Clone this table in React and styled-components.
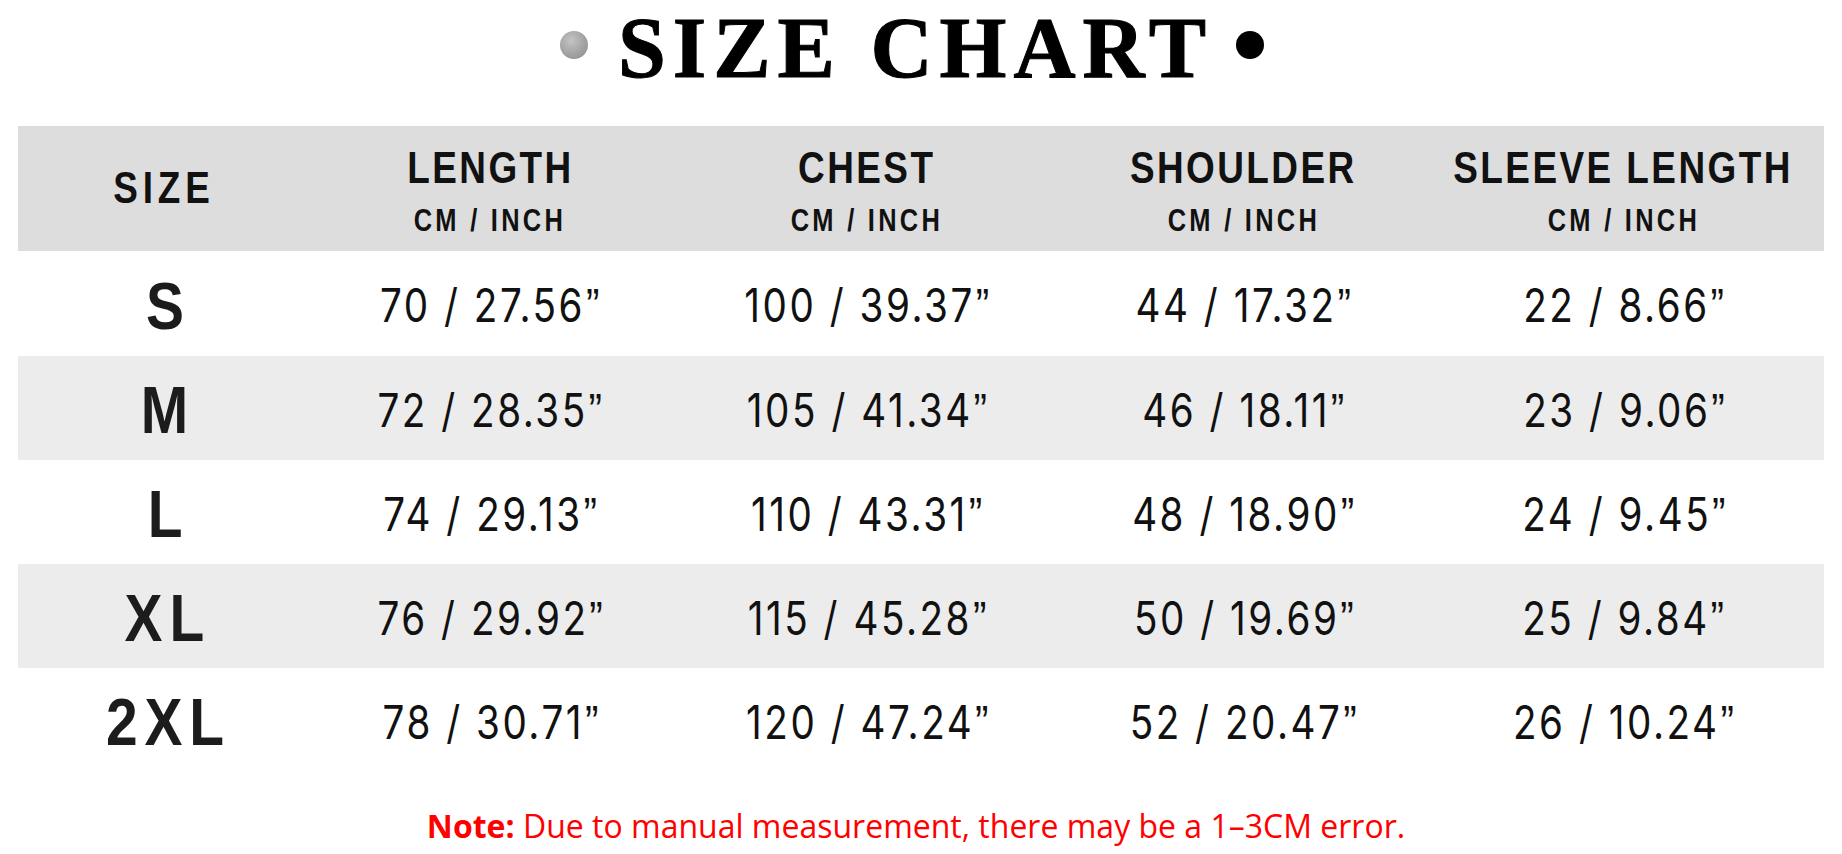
import React from "react";
import styled, { createGlobalStyle } from "styled-components";

const GlobalStyle = createGlobalStyle`
  html, body {
    margin: 0;
    padding: 0;
    background: #ffffff;
  }
  body {
    font-family: "Liberation Sans", Arial, sans-serif;
    color: #141414;
  }
`;

const columns = [
  { key: "length", title: "LENGTH" },
  { key: "chest", title: "CHEST" },
  { key: "shoulder", title: "SHOULDER" },
  { key: "sleeve", title: "SLEEVE LENGTH" },
];

// cm / inch pairs, the inch mark is added when rendering
const rows = [
  { size: "S", length: "70 / 27.56", chest: "100 / 39.37", shoulder: "44 / 17.32", sleeve: "22 / 8.66" },
  { size: "M", length: "72 / 28.35", chest: "105 / 41.34", shoulder: "46 / 18.11", sleeve: "23 / 9.06" },
  { size: "L", length: "74 / 29.13", chest: "110 / 43.31", shoulder: "48 / 18.90", sleeve: "24 / 9.45" },
  { size: "XL", length: "76 / 29.92", chest: "115 / 45.28", shoulder: "50 / 19.69", sleeve: "25 / 9.84" },
  { size: "2XL", length: "78 / 30.71", chest: "120 / 47.24", shoulder: "52 / 20.47", sleeve: "26 / 10.24" },
];

const App = () => {
  return (
    <Page>
      <GlobalStyle />
      <TitleBar>
        <Dot $tone="gray" />
        <Title>SIZE CHART</Title>
        <Dot $tone="black" />
      </TitleBar>

      <Table>
        <Row $tone="head" $height={125}>
          <HeadCell>
            <SizeHead>SIZE</SizeHead>
          </HeadCell>
          {columns.map((c) => (
            <HeadCell key={c.key} $stacked>
              <HeadTitle>{c.title}</HeadTitle>
              <HeadUnit>CM / INCH</HeadUnit>
            </HeadCell>
          ))}
        </Row>

        {rows.map((r, i) => (
          <Row key={r.size} $tone={i % 2 === 1 ? "stripe" : "plain"} $height={i === 0 ? 105 : 104}>
            <Cell>
              <SizeLabel>{r.size}</SizeLabel>
            </Cell>
            {columns.map((c) => (
              <Cell key={c.key}>
                <Value>
                  {r[c.key]}
                  <Inch>”</Inch>
                </Value>
              </Cell>
            ))}
          </Row>
        ))}
      </Table>

      <Note>
        <strong>Note:</strong> Due to manual measurement, there may be a 1–3CM error.
      </Note>
    </Page>
  );
};

export default App;

const Page = styled.div`
  width: 1842px;
  height: 854px;
  overflow: hidden;
  display: flex;
  flex-direction: column;
  align-items: center;
`;

const TitleBar = styled.div`
  height: 126px;
  display: flex;
  align-items: flex-start;
  justify-content: center;
  gap: 30px;
  margin-left: -18px;
`;

const Title = styled.h1`
  margin: 0;
  font-family: "Liberation Serif", "Times New Roman", serif;
  font-weight: 700;
  font-size: 86px;
  line-height: 96px;
  letter-spacing: 7px;
  margin-right: -7px;
  color: #000;
  -webkit-text-stroke: 1px #000;
`;

const Dot = styled.span`
  width: 28px;
  height: 28px;
  margin-top: 31px;
  border-radius: 50%;
  flex-shrink: 0;
  background: ${(p) =>
    p.$tone === "gray"
      ? "radial-gradient(circle at 40% 35%, #c4c4c4 0%, #a2a2a2 55%, #8a8a8a 100%)"
      : "#000"};
`;

const Table = styled.div`
  width: 1806px;
  display: flex;
  flex-direction: column;
`;

const Row = styled.div`
  display: grid;
  grid-template-columns: 292px 360px 394px 359px 401px;
  height: ${(p) => p.$height}px;
  background: ${(p) =>
    p.$tone === "head" ? "#dddddd" : p.$tone === "stripe" ? "#ececec" : "#ffffff"};
`;

const HeadCell = styled.div`
  display: flex;
  flex-direction: column;
  align-items: center;
  justify-content: ${(p) => (p.$stacked ? "flex-start" : "center")};
  padding-top: ${(p) => (p.$stacked ? "20px" : "0")};
  gap: 15px;
  box-sizing: border-box;
`;

/* condensed look: Liberation Sans squeezed horizontally, like Arial Narrow */
const HeadTitle = styled.div`
  font-family: "Liberation Sans", Arial, sans-serif;
  font-weight: 700;
  font-size: 45px;
  line-height: 44px;
  letter-spacing: 3px;
  white-space: nowrap;
  color: #111;
  transform: scaleX(0.82);
`;

const SizeHead = styled(HeadTitle)`
  margin-top: -2px;
  letter-spacing: 6px;
`;

const HeadUnit = styled.div`
  font-family: "Liberation Sans", Arial, sans-serif;
  font-weight: 700;
  font-size: 31px;
  line-height: 31px;
  letter-spacing: 4px;
  white-space: nowrap;
  color: #111;
  transform: scaleX(0.82);
`;

const Cell = styled.div`
  display: flex;
  align-items: center;
  justify-content: center;
  padding-top: 4px;
  box-sizing: border-box;
`;

const SizeLabel = styled.div`
  font-family: "Liberation Sans", Arial, sans-serif;
  font-weight: 700;
  font-size: 67px;
  line-height: 66px;
  letter-spacing: 8px;
  margin-right: -8px;
  color: #1c1c1c;
  transform: scaleX(0.85);
`;

const Value = styled.div`
  font-family: Inter, "Liberation Sans", sans-serif;
  font-weight: 400;
  font-size: 46px;
  line-height: 47px;
  letter-spacing: 3px;
  white-space: nowrap;
  color: #111;
  transform: scaleX(0.84);
`;

const Inch = styled.span`
  font-family: "Liberation Sans", Arial, sans-serif;
  font-size: 48px;
  letter-spacing: 0;
  margin-left: 1px;
`;

const Note = styled.p`
  margin: 38px 0 0;
  font-family: "Open Sans", "Noto Sans", sans-serif;
  font-size: 32px;
  line-height: 32px;
  color: #ff0000;
  white-space: nowrap;
  margin-left: -10px;

  strong {
    font-weight: 700;
  }
`;
